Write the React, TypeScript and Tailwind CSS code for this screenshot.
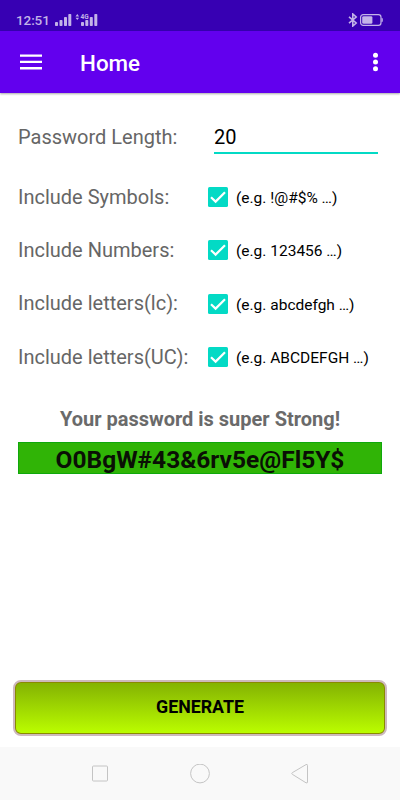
import { useState } from "react"

interface Option {
  id: string
  label: string
  example: string
}

const OPTIONS: Option[] = [
  { id: "symbols", label: "Include Symbols:", example: "(e.g. !@#$% …)" },
  { id: "numbers", label: "Include Numbers:", example: "(e.g. 123456 …)" },
  { id: "lower", label: "Include letters(lc):", example: "(e.g. abcdefgh …)" },
  { id: "upper", label: "Include letters(UC):", example: "(e.g. ABCDEFGH …)" },
]

function StatusBar() {
  return (
    <div className="flex h-[31px] items-start justify-between bg-[#3700b3] pr-4 pl-[16px] text-[#c3b3e8]">
      <div className="flex items-start">
        <span className="mt-[12px] w-[39px] text-[13.5px] leading-4 font-medium tracking-[-0.1px] whitespace-nowrap">
          12:51
        </span>
        <svg className="mt-[13px]" width="50" height="14" viewBox="0 0 50 14" fill="currentColor">
          <rect x="0" y="9" width="3" height="4" rx="0.8" />
          <rect x="4.5" y="7" width="3" height="6" rx="0.8" />
          <rect x="9" y="4" width="3" height="9" rx="0.8" />
          <rect x="13.3" y="1" width="3" height="12" rx="0.8" />
          <path d="M20.5 3.5 22.3 1l1.8 2.5zM20.5 4.7h3.6l-1.8 2.2z" />
          <rect x="26" y="9" width="3" height="4" rx="0.8" />
          <rect x="30.3" y="7" width="3" height="6" rx="0.8" />
          <rect x="34.8" y="4" width="3" height="9" rx="0.8" />
          <rect x="39.3" y="1" width="3" height="12" rx="0.8" />
          <text x="25.6" y="6" fontSize="6.5" fontWeight="700">4G</text>
        </svg>
      </div>
      <div className="flex items-start">
        <svg className="mt-[13px]" width="10" height="14" viewBox="0 0 10 14" fill="none" stroke="currentColor" strokeWidth="1.6">
          <path d="M1 3.8 8.2 10 4.8 13V1l3.4 3L1 10.2" />
        </svg>
        <svg className="mt-[14px] ml-[2px]" width="24" height="12" viewBox="0 0 24 12">
          <rect x="0.6" y="0.6" width="20.4" height="10.8" rx="2.6" fill="none" stroke="currentColor" strokeWidth="1.2" />
          <rect x="2.2" y="2.2" width="10.2" height="7.6" rx="1.4" fill="currentColor" />
          <path d="M21.5 4h.3a1 1 0 0 1 1 1v2a1 1 0 0 1-1 1h-.3z" fill="currentColor" />
        </svg>
      </div>
    </div>
  )
}

function AppBar() {
  return (
    <header className="flex h-[62px] items-center bg-[#6200ee] pr-[22px] pl-[20px] text-white shadow-[0_1px_2px_rgba(0,0,0,0.35)]">
      <button type="button" aria-label="Menu">
        <svg width="22" height="16" viewBox="0 0 22 16" fill="currentColor">
          <path d="M0 .5h22v2.3H0zM0 6.8h22v2.3H0zM0 13.1h22v2.3H0z" />
        </svg>
      </button>
      <h1 className="ml-[38px] flex-1 pt-[4px] text-[22.4px] font-medium">Home</h1>
      <button type="button" aria-label="More options">
        <svg width="5" height="20" viewBox="0 0 5 20" fill="currentColor">
          <circle cx="2.5" cy="3.2" r="2.5" />
          <circle cx="2.5" cy="10" r="2.5" />
          <circle cx="2.5" cy="16.7" r="2.5" />
        </svg>
      </button>
    </header>
  )
}

function OptionRow({ option, checked, onToggle }: { option: Option; checked: boolean; onToggle: () => void }) {
  return (
    <label className="flex h-[53.33px] items-center">
      <span className="w-[190px] pb-px text-[20px] whitespace-nowrap text-[#666]">{option.label}</span>
      <input type="checkbox" className="sr-only" checked={checked} onChange={onToggle} />
      <svg width="20" height="20" viewBox="0 0 20 20">
        <rect width="20" height="20" rx="1.6" fill={checked ? "#03dac5" : "#757575"} />
        {checked && <path d="m3 10.3 4.6 4.3L17 5.2" fill="none" stroke="#fff" strokeWidth="2.2" />}
      </svg>
      <span className="ml-2 pt-[3px] text-[15.5px] whitespace-nowrap text-black">{option.example}</span>
    </label>
  )
}

function NavBar() {
  return (
    <nav className="flex h-[53px] items-center justify-center gap-[80px] bg-[#f9f9f9]">
      <svg width="20" height="20" viewBox="0 0 20 20" fill="none" stroke="#c4c4c4">
        <rect x="2.5" y="2" width="15" height="15" rx="1" />
      </svg>
      <svg width="20" height="20" viewBox="0 0 20 20" fill="none" stroke="#c4c4c4">
        <circle cx="10" cy="9.5" r="9.4" />
      </svg>
      <svg width="20" height="20" viewBox="0 0 20 20" fill="none" stroke="#c4c4c4">
        <path d="M2.3 8.7 16 .6q1.5-.6 1.5.7v16.8q0 1.3-1.5.7L2.3 10.3q-1.1-.8 0-1.6z" />
      </svg>
    </nav>
  )
}

export default function App() {
  const [length, setLength] = useState("20")
  const [selected, setSelected] = useState<string[]>(OPTIONS.map((o) => o.id))

  const toggle = (id: string) => {
    setSelected((prev) => (prev.includes(id) ? prev.filter((s) => s !== id) : [...prev, id]))
  }

  return (
    <div className="flex h-screen w-full flex-col bg-white font-[Roboto,sans-serif]">
      <StatusBar />
      <AppBar />
      <main className="flex flex-1 flex-col pt-[25px]">
        <div className="flex h-[52.4px] items-start px-[18px]">
          <label htmlFor="length" className="w-[196px] pt-[4px] text-[20px] leading-[30px] whitespace-nowrap text-[#666]">
            Password Length:
          </label>
          <input
            id="length"
            type="text"
            value={length}
            onChange={(e) => setLength(e.target.value)}
            className="h-[36px] w-[164px] border-b-2 border-[#03dac5] pt-[4px] text-[20px] text-black outline-none"
          />
        </div>
        <div className="px-[18px]">
          {OPTIONS.map((option) => (
            <OptionRow
              key={option.id}
              option={option}
              checked={selected.includes(option.id)}
              onToggle={() => toggle(option.id)}
            />
          ))}
        </div>
        <p className="mt-[20.3px] text-center text-[20px] leading-[30px] font-bold text-[#6a6a6a]">
          Your password is super Strong!
        </p>
        <div className="mx-[18px] mt-[8px] h-[32px] border border-[#0fa80c] bg-[#30b406] text-center text-[24.5px] leading-[33px] font-bold text-[#0a0f05]">
          O0BgW#43&amp;6rv5e@Fl5Y$
        </div>
        <button
          type="button"
          className="mx-[13px] mt-auto mb-[11px] h-[56px] rounded-[8px] border-2 border-[#cdb9bd] bg-[#8a8a00] p-[1px] text-[17.8px] font-bold text-black"
        >
          <span className="flex h-full items-center justify-center rounded-[5px] bg-linear-to-b from-[#84b302] to-[#bbfd00] pb-px">
            GENERATE
          </span>
        </button>
      </main>
      <NavBar />
    </div>
  )
}
